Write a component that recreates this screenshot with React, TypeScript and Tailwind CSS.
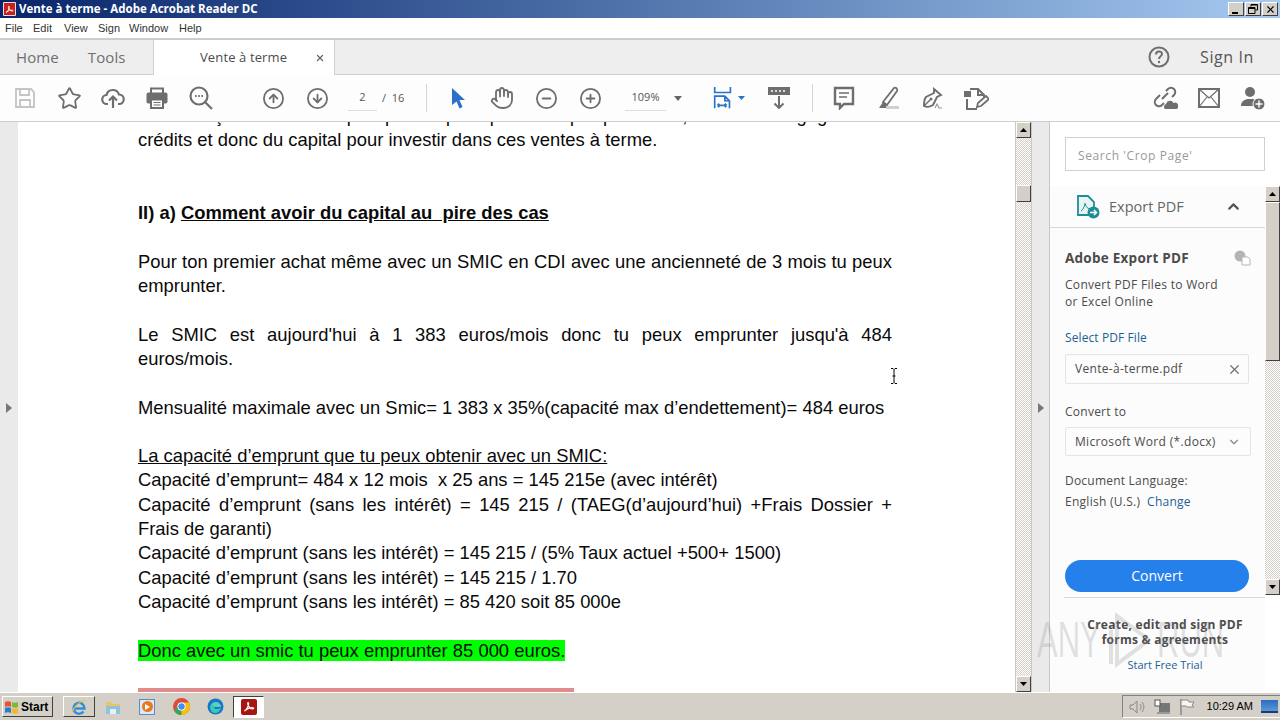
import { Star, CircleArrowUp, CircleArrowDown, CircleMinus, CirclePlus, Hand, ChevronUp, ChevronDown, X } from "lucide-react";

const hatch = "bg-[conic-gradient(#d4d0c8_25%,#ffffff_0_50%,#d4d0c8_0_75%,#ffffff_0)] bg-[length:2px_2px]";
const bevel = "bg-[#d4d0c8] border border-t-white border-l-white border-r-[#404040] border-b-[#404040]";

const IconBox = ({ children, className = "w-[44px]" }: { children: React.ReactNode; className?: string }) => (
  <div className={`${className} h-full flex items-center justify-center shrink-0 text-[#6e6e6e]`}>{children}</div>
);

const AcrobatGlyph = ({ color = "#fff", size = 12 }: { color?: string; size?: number }) => (
  <svg width={size} height={size} viewBox="0 0 24 24" fill="none" stroke={color} strokeWidth="2.4">
    <path d="M3 20c3-1 7-8 8-13 .4-2 .2-4-.8-4S9 6 11 10c2 4 5 6 8 6 2 0 3-1 2-2-2-1-8 0-12 2-3 1.500-5 3-6 4z" />
  </svg>
);

const WinBtn = ({ children }: { children: React.ReactNode }) => (
  <div className={`w-[16px] h-[14px] ${bevel} flex items-center justify-center text-black`}>{children}</div>
);

const ScrollBtn = ({ up }: { up?: boolean }) => (
  <div className={`w-full h-[16px] shrink-0 ${bevel} flex items-center justify-center`}>
    <svg width="7" height="4" viewBox="0 0 7 4">
      <path d={up ? "M3.500 0 7 4H0z" : "M0 0h7L3.500 4z"} fill="#000" />
    </svg>
  </div>
);

const Para = ({ children, className = "" }: { children: React.ReactNode; className?: string }) => (
  <p className={`text-justify ${className}`}>{children}</p>
);

const Gap = () => <div className="h-[24.3px]" />;

const TitleBar = () => (
  <div className="h-[18px] flex items-center bg-gradient-to-r from-[#0a246a] to-[#a6caf0] pl-[3px] pr-[2px]">
    <div className="w-[13px] h-[14px] bg-[#e8e0dc] rounded-[1px] flex items-center justify-center mr-[3px]">
      <div className="w-[11px] h-[12px] bg-[#c8201c] flex items-center justify-center">
        <AcrobatGlyph size={9} />
      </div>
    </div>
    <span className="text-white font-bold text-[11.500px] font-['Open_Sans',sans-serif]">Vente à terme - Adobe Acrobat Reader DC</span>
    <div className="ml-auto flex gap-[1px]">
      <WinBtn><div className="w-[6px] h-[2px] bg-black mt-[7px] -ml-[2px]" /></WinBtn>
      <WinBtn>
        <svg width="10" height="10" viewBox="0 0 10 10" fill="none" stroke="#000">
          <path d="M3 2.500V.500h6.500V6H7.500M.500 3.500h6.500V9.500H.500z" />
          <path d="M3 1h6M1 4.500h6" />
        </svg>
      </WinBtn>
      <WinBtn><X size={11} strokeWidth={2.4} /></WinBtn>
    </div>
  </div>
);

const MenuBar = () => (
  <div className="h-[20px] bg-white flex items-center pl-[5px] text-[11px] text-[#333] font-['Liberation_Sans',sans-serif]">
    <span className="w-[28px]">File</span>
    <span className="w-[31px]">Edit</span>
    <span className="w-[34px]">View</span>
    <span className="w-[31px]">Sign</span>
    <span className="w-[50px]">Window</span>
    <span>Help</span>
  </div>
);

const TabBar = () => (
  <div className="h-[37px] bg-[#eeeeee] border-t-2 border-[#cccccc] flex font-['Open_Sans',sans-serif] text-[#6e6e6e]">
    <div className="w-[154px] flex items-center border-b border-r border-[#d0d0d0] pl-[16px] text-[15px] tracking-[0.1px] gap-[29px]">
      <span>Home</span>
      <span>Tools</span>
    </div>
    <div className="w-[180px] bg-white flex items-center pl-[46px] text-[13px] text-[#4b4b4b] tracking-[0.12px]">
      <span>Vente à terme</span>
      <X size={10} strokeWidth={3} className="ml-[28px] text-[#666]" />
    </div>
    <div className="flex-1 border-b border-l border-[#d0d0d0] flex items-center justify-end pr-[26px]">
      <svg width="22" height="22" viewBox="0 0 22 22" fill="none" className="mr-[30px]">
        <circle cx="11" cy="11" r="9.500" stroke="#6e6e6e" strokeWidth="2" />
        <path d="M8 8.500c0-4 6-4 6-.5 0 2.500-3 2-3 5" stroke="#6e6e6e" strokeWidth="2" />
        <circle cx="11" cy="16" r="1.200" fill="#6e6e6e" />
      </svg>
      <span className="text-[16px] text-[#555] tracking-[0.6px]">Sign In</span>
    </div>
  </div>
);

const Toolbar = () => (
  <div className="h-[47px] bg-[#fdfdfd] border-b border-[#cfcfcf] flex items-center pl-[3px] text-[#6e6e6e] font-['Open_Sans',sans-serif]">
    <IconBox>
      <svg width="22" height="22" viewBox="0 0 22 22" fill="none" stroke="#c4c4c4" strokeWidth="1.800">
        <path d="M2 2h15l3 3v15H2z" /><path d="M6 2v6h9V2M6 20v-7h10v7" />
      </svg>
    </IconBox>
    <IconBox><Star size={25} strokeWidth={1.7} /></IconBox>
    <IconBox>
      <svg width="24" height="24" viewBox="0 0 24 24" fill="none" stroke="#6e6e6e" strokeWidth="2.200">
        <path d="M7 18H6a4.500 4.500 0 0 1-.5-9A6.500 6.500 0 0 1 18 8.500a4.500 4.500 0 0 1 0 9.500h-1" />
        <path d="M12 22V11M8 14.500l4-4 4 4" />
      </svg>
    </IconBox>
    <IconBox>
      <svg width="24" height="24" viewBox="0 0 24 24">
        <path d="M6 7V2.500h12V7" fill="none" stroke="#6e6e6e" strokeWidth="2" />
        <rect x="1.500" y="6.500" width="21" height="11" rx="2" fill="#6e6e6e" />
        <rect x="6" y="13.500" width="12" height="8.500" fill="#fff" stroke="#6e6e6e" strokeWidth="2" />
        <path d="M8.500 16.500h7M8.500 19h7" stroke="#6e6e6e" strokeWidth="1.200" />
      </svg>
    </IconBox>
    <IconBox>
      <svg width="26" height="26" viewBox="0 0 26 26" fill="none" stroke="#6e6e6e" strokeWidth="2.200">
        <circle cx="11" cy="11" r="8.500" /><path d="M17 17l7 7" />
        <path d="M7 11h1.600M10.200 11h1.600M13.400 11H15" />
      </svg>
    </IconBox>
    <div className="w-[28px] shrink-0" />
    <IconBox><CircleArrowUp size={23} strokeWidth={1.900} /></IconBox>
    <IconBox><CircleArrowDown size={23} strokeWidth={1.900} /></IconBox>
    <div className="w-[9px] shrink-0" />
    <div className="w-[29px] h-[26px] border-b border-[#ddd] text-[11px] text-center leading-[24px] text-[#555] shrink-0">2</div>
    <span className="ml-[5px] w-[44px] shrink-0 text-[11px] text-[#555]">/&nbsp; 16</span>
    <div className="w-px h-[28px] bg-[#d4d4d4] shrink-0" />
    <div className="w-[9px] shrink-0" />
    <IconBox>
      <svg width="16" height="22" viewBox="0 0 16 22"><path d="M2 1l13 12H9.500l3 7-3 1.500-3-7L2 18z" fill="#2a72c8" /></svg>
    </IconBox>
    <IconBox><Hand size={24} strokeWidth={1.800} /></IconBox>
    <IconBox><CircleMinus size={23} strokeWidth={1.900} /></IconBox>
    <IconBox><CirclePlus size={23} strokeWidth={1.900} /></IconBox>
    <div className="w-[13px] shrink-0" />
    <div className="w-[41px] h-[26px] border-b border-[#ddd] text-[11px] text-center leading-[24px] text-[#555] shrink-0">109%</div>
    <svg width="8" height="5" viewBox="0 0 8 5" className="ml-[8px] shrink-0"><path d="M0 0h8L4 5z" fill="#666" /></svg>
    <div className="w-[31px] shrink-0" />
    <svg width="20" height="24" viewBox="0 0 20 26" fill="none" stroke="#2a72c8" strokeWidth="1.800" className="shrink-0">
      <path d="M1 1v6h17V1M1 24V11h11l5 5v8M12 11v5h5M4 21h10M4 21l2-2M4 21l2 2M14 21l-2-2M14 21l-2 2" />
    </svg>
    <svg width="7" height="4" viewBox="0 0 7 4" className="ml-[5px] shrink-0"><path d="M0 0h7L3.500 4z" fill="#2a72c8" /></svg>
    <div className="w-[23px] shrink-0" />
    <svg width="22" height="22" viewBox="0 0 22 22" fill="none" className="shrink-0">
      <rect x="0" y="0" width="22" height="8" fill="#6e6e6e" />
      <path d="M3 4h2M7 4h2M11 4h2M15 4h2" stroke="#fff" strokeWidth="1.500" />
      <path d="M11 9v12M6.500 16.500l4.500 4.500 4.500-4.500" stroke="#6e6e6e" strokeWidth="2" />
    </svg>
    <div className="w-[22px] shrink-0" />
    <div className="w-px h-[28px] bg-[#d4d4d4] shrink-0" />
    <div className="w-[9px] shrink-0" />
    <IconBox>
      <svg width="22" height="24" viewBox="0 0 22 24" fill="none">
        <path d="M2 2h18v16H11l-4 4v-4H2z" stroke="#6e6e6e" strokeWidth="2.400" fill="#fff" />
        <path d="M6 7h10M6 11h8" stroke="#6e6e6e" strokeWidth="1.500" />
      </svg>
    </IconBox>
    <IconBox>
      <svg width="24" height="24" viewBox="0 0 24 24" fill="none">
        <path d="M7 16L18 2c2-1 4 1 3 3L11 19z" stroke="#6e6e6e" strokeWidth="1.800" />
        <path d="M7 16l-4 6h7l1-3" fill="#6e6e6e" />
        <rect x="10" y="20" width="13" height="3" fill="#d0d0d0" />
      </svg>
    </IconBox>
    <IconBox>
      <svg width="24" height="24" viewBox="0 0 24 24" fill="none">
        <path d="M14 3l7 6-4 2-4 8c-3 2-7 2-9 1 0-3 0-7 2-9l8-4z" stroke="#6e6e6e" strokeWidth="1.900" />
        <path d="M4 20l6-6" stroke="#6e6e6e" strokeWidth="1.500" />
        <circle cx="11" cy="13" r="1.500" fill="#6e6e6e" />
        <path d="M15 22l2-4 2 4h3" stroke="#999" strokeWidth="1.200" />
      </svg>
    </IconBox>
    <IconBox>
      <svg width="26" height="26" viewBox="0 0 26 26" fill="none">
        <path d="M7 4h8l6 6v2M4 14v10h10" stroke="#6e6e6e" strokeWidth="2" />
        <path d="M15 4v6h6" stroke="#6e6e6e" strokeWidth="2" />
        <rect x="1" y="6" width="7" height="6" fill="#6e6e6e" />
        <path d="M14 22l1-4 8-7 3 3-8 7z" stroke="#6e6e6e" strokeWidth="1.800" />
      </svg>
    </IconBox>
    <div className="flex-1" />
    <IconBox>
      <svg width="26" height="26" viewBox="0 0 26 26" fill="none">
        <path d="M10 14l6-6M8 10L4 14a4.200 4.200 0 0 0 6 6l2-2M14 6l2-2a4.200 4.200 0 0 1 6 6l-2 2" stroke="#6e6e6e" strokeWidth="2" />
        <path d="M13 24a3 3 0 0 1 1-5 4 4 0 0 1 7.500-1 3 3 0 0 1 3 6z" fill="#6e6e6e" />
      </svg>
    </IconBox>
    <IconBox>
      <svg width="22" height="20" viewBox="0 0 22 20" fill="none" stroke="#6e6e6e">
        <rect x="1" y="1" width="20" height="18" strokeWidth="2" /><path d="M1 1l10 9 10-9M1 19l8-10M21 19l-8-10" strokeWidth="1.200" />
      </svg>
    </IconBox>
    <IconBox>
      <svg width="26" height="26" viewBox="0 0 26 26">
        <circle cx="10" cy="7" r="5" fill="#6e6e6e" />
        <path d="M1 21c0-5 4-6 6-7h6c2 .5 3 1 3 3v4z" fill="#6e6e6e" />
        <circle cx="19" cy="19" r="6" fill="#6e6e6e" stroke="#fff" />
        <path d="M19 15.500v7M15.500 19h7" stroke="#fff" strokeWidth="1.500" />
      </svg>
    </IconBox>
    <div className="w-[5px] shrink-0" />
  </div>
);

const Document = () => (
  <div className="w-[997px] bg-white overflow-hidden shrink-0">
    <div className="w-[754px] ml-[120px] -mt-[18px] font-['Liberation_Sans',sans-serif] text-[18.400px] leading-[24.3px] text-[#0a0a0a]">
      <Para className="[text-align-last:justify]">Les Français ne le font pas parce qu'ils pensent que pour cela, et il faut engager leurs</Para>
      <Para>crédits et donc du capital pour investir dans ces ventes à terme.</Para>
      <Gap /><Gap />
      <p className="font-bold">II) a) <span className="underline">Comment avoir du capital au&nbsp; pire des cas</span></p>
      <Gap />
      <Para>Pour ton premier achat même avec un SMIC en CDI avec une ancienneté de 3 mois tu peux emprunter.</Para>
      <Gap />
      <Para>Le SMIC est aujourd'hui à 1 383 euros/mois donc tu peux emprunter jusqu'à 484 euros/mois.</Para>
      <Gap />
      <Para>Mensualité maximale avec un Smic= 1 383 x 35%(capacité max d’endettement)= 484 euros</Para>
      <Gap />
      <p className="underline">La capacité d’emprunt que tu peux obtenir avec un SMIC:</p>
      <p>Capacité d’emprunt= 484 x 12 mois&nbsp; x 25 ans = 145 215e (avec intérêt)</p>
      <Para>Capacité d’emprunt (sans les intérêt) = 145 215 / (TAEG(d’aujourd’hui) +Frais Dossier + Frais de garanti)</Para>
      <p>Capacité d’emprunt (sans les intérêt) = 145 215 / (5% Taux actuel +500+ 1500)</p>
      <p>Capacité d’emprunt (sans les intérêt) = 145 215 / 1.70</p>
      <p>Capacité d’emprunt (sans les intérêt) = 85 420 soit 85 000e</p>
      <Gap />
      <p><span className="bg-[#00ff00]">Donc avec un smic tu peux emprunter 85 000 euros.</span></p>
      <Gap />
      <div className="w-[436px] h-[24px] mt-[1px] bg-[#e08c8c]" />
    </div>
  </div>
);

const DocScroll = () => (
  <div className={`w-[17px] shrink-0 flex flex-col ${hatch} border-x border-[#c8c8c8]`}>
    <ScrollBtn up />
    <div className="h-[47px] shrink-0" />
    <div className={`h-[17px] w-full shrink-0 ${bevel}`} />
    <div className="flex-1" />
    <ScrollBtn />
  </div>
);

const Rail = ({ w }: { w: string }) => (
  <div className={`${w} shrink-0 bg-[#eaeaea] flex items-center justify-center`}>
    <svg width="6" height="10" viewBox="0 0 6 10" className="mt-[1px]"><path d="M0 0l6 5-6 5z" fill="#777" /></svg>
  </div>
);

const SidePanel = () => (
  <div className="flex-1 bg-white border-l border-[#c8c8c8] flex flex-col font-['Open_Sans',sans-serif] text-[#4b4b4b] relative">
    <div className="pl-[15px] pt-[15px] h-[64px]">
      <div className="w-[200px] h-[34px] border border-[#cfcfcf] flex items-center pl-[12px] pt-[3px] text-[12px] text-[#999] tracking-[0.6px]">Search 'Crop Page'</div>
    </div>
    <div className="flex flex-1 min-h-0">
      <div className="w-[215px] flex flex-col bg-[#fcfcfc]">
        <div className="h-[42px] shrink-0 border-b border-[#d8d8d8] flex items-center pl-[26px] pr-[23px]">
          <svg width="24" height="24" viewBox="0 0 24 24" fill="none" className="shrink-0">
            <path d="M2 1h10l6 6v13H2z" stroke="#1c8f96" strokeWidth="1.800" fill="#e8f4f4" />
            <path d="M5 16c2-1 3-4 4-7 0-2 0 0 1 2s3 3 5 3" stroke="#1c8f96" strokeWidth="1" />
            <circle cx="17.500" cy="17.500" r="6" fill="#1c8f96" />
            <path d="M14 17.500h6M18 15l2.500 2.500L18 20" stroke="#fff" strokeWidth="1.500" />
          </svg>
          <span className="ml-[9px] text-[14.500px] text-[#666]">Export PDF</span>
          <ChevronUp size={17} strokeWidth={3} className="ml-auto text-[#555]" />
        </div>
        <div className="flex-1 pl-[15px] pr-[15px] relative">
          <div className="flex items-center mt-[21px] h-[18px]">
            <span className="font-bold text-[13.500px] text-[#4b4b4b] tracking-[0.25px]">Adobe Export PDF</span>
            <svg width="17" height="16" viewBox="0 0 17 16" className="ml-auto -mr-[1px]">
              <circle cx="6" cy="6" r="5.500" fill="#b4b4b4" />
              <path d="M8 7h6l2 2v6H8z" fill="#fff" stroke="#b4b4b4" />
            </svg>
          </div>
          <p className="mt-[9px] text-[12px] leading-[17px] tracking-[0.3px]">Convert PDF Files to Word<br />or Excel Online</p>
          <p className="mt-[19px] text-[12px] leading-[17px] text-[#1c5f96] tracking-[0.1px]">Select PDF File</p>
          <div className="mt-[8px] w-[184px] h-[30px] border border-[#e4e4e4] rounded-[2px] flex items-center pl-[9px] pr-[6px] text-[12px] tracking-[0.3px]">
            <span>Vente-à-terme.pdf</span>
            <X size={15} strokeWidth={2.200} className="ml-auto text-[#777]" />
          </div>
          <p className="mt-[19px] text-[12px] leading-[17px] tracking-[0.25px]">Convert to</p>
          <div className="mt-[7px] w-[186px] h-[29px] border border-[#e4e4e4] rounded-[2px] flex items-center pl-[9px] pr-[9px] text-[12px]">
            <span className="whitespace-nowrap tracking-[0.33px]">Microsoft Word (*.docx)</span>
            <ChevronDown size={14} strokeWidth={2} className="ml-auto text-[#888]" />
          </div>
          <p className="mt-[16px] text-[12px] leading-[17px] tracking-[0.22px]">Document Language:</p>
          <p className="mt-[4px] text-[12px] leading-[17px] tracking-[0.27px]">English (U.S.)&nbsp; <span className="text-[#1c5f96]">Change</span></p>
          <div className="mt-[50px] w-[184px] h-[32px] rounded-full bg-[#2680eb] text-white text-[14px] flex items-center justify-center pb-[1px]">Convert</div>
          <div className="absolute left-[14px] right-0 top-[369px] h-px bg-[#d8d8d8]" />
        </div>
      </div>
      <div className={`w-[15px] ${hatch} flex flex-col h-[409px]`}>
        <ScrollBtn up />
        <div className={`h-[159px] w-full shrink-0 ${bevel}`} />
        <div className="flex-1" />
        <ScrollBtn />
      </div>
    </div>
    <div className="absolute left-[22px] w-[186px] top-[495px] text-center font-bold text-[12px] leading-[15px] text-[#4b4b4b] tracking-[0.25px]">
      <p>Create, edit and sign PDF</p>
      <p>forms &amp; agreements</p>
      <p className="mt-[10px] font-normal text-[#1c5f96] text-[11px] tracking-normal">Start Free Trial</p>
    </div>
  </div>
);

const Watermark = () => (
  <div className="absolute left-[1037px] top-[488px] flex items-center text-[#8a8a8a]/25 text-[50px] leading-[50px] font-['Liberation_Sans',sans-serif] pointer-events-none">
    <span className="w-[72px] inline-block scale-x-[0.62] origin-left">ANY</span>
    <svg width="42" height="60" viewBox="0 0 42 60" fill="none" stroke="#8a8a8a" strokeOpacity="0.25" strokeWidth="4"><path d="M8 6l32 24-32 24z" /><path d="M2 20v34" /></svg>
    <span className="w-[80px] ml-[6px] inline-block scale-x-[0.62] origin-left">RUN</span>
  </div>
);

const TrayIcons = () => (
  <>
    <svg width="16" height="14" viewBox="0 0 16 14" fill="none" stroke="#888"><path d="M1 5h3l4-4v12l-4-4H1zM11 4c1.500 2 1.500 4 0 6M13 2c2.500 3 2.500 7 0 10" /></svg>
    <svg width="17" height="16" viewBox="0 0 17 16" className="ml-[9px]"><rect x="5" y="4" width="11" height="9" fill="#777" /><rect x="1" y="1" width="5" height="6" fill="#fff" stroke="#555" /><path d="M3 13h13v2H3z" fill="#999" /></svg>
    <svg width="16" height="16" viewBox="0 0 16 16" fill="none" className="ml-[8px]" stroke="#888"><path d="M2 0v16" strokeWidth="1.500" /><path d="M2 1h7l1 2h5l-2 3 2 2H8L7 7H2z" fill="#f4f4f0" /></svg>
  </>
);

const Taskbar = () => (
  <div className="h-[28px] bg-[#d4d0c8] border-t border-white flex items-center pl-[2px] font-['Liberation_Sans',sans-serif]">
    <div className={`w-[51px] h-[21px] ${bevel} flex items-center pl-[1px]`}>
      <svg width="16" height="15" viewBox="0 0 16 15" className="shrink-0">
        <path d="M1 3c2-1 4-1 6 0v5c-2-1-4-1-6 0z" fill="#e8552c" />
        <path d="M8 3c2 1 4 1 6 0v5c-2 1-4 1-6 0z" fill="#7ab93c" />
        <path d="M1 9c2-1 4-1 6 0v5c-2-1-4-1-6 0z" fill="#2a7bd8" />
        <path d="M8 9c2 1 4 1 6 0v5c-2 1-4 1-6 0z" fill="#f6b820" />
      </svg>
      <span className="font-bold text-[12px] ml-[1px] text-black">Start</span>
    </div>
    <div className={`ml-[10px] w-[32px] h-[21px] ${bevel} flex items-center justify-center`}>
      <svg width="18" height="18" viewBox="0 0 18 18" fill="none">
        <path d="M3 10.500h11.500a5.500 5.500 0 1 0-1 3" stroke="#2e8fd8" strokeWidth="2.400" />
        <path d="M2 14c3-6 8-11 14-12" stroke="#f0c040" strokeWidth="1.200" />
      </svg>
    </div>
    <div className="w-[34px] ml-[1px] flex justify-center">
      <svg width="16" height="16" viewBox="0 0 16 16"><path d="M1 3h5l2 2h7v3H1z" fill="#e8c468" /><path d="M1 7h14v8H1z" fill="#8cc4dc" /><rect x="5" y="10" width="6" height="5" fill="#e8f0f4" /></svg>
    </div>
    <div className="w-[34px] flex justify-center">
      <div className="w-[16px] h-[16px] border border-[#5a8cc8] bg-[#dde8f4] flex items-center justify-center">
        <div className="w-[11px] h-[11px] rounded-full bg-[#e87820] flex items-center justify-center">
          <div className="w-0 h-0 border-y-[3px] border-y-transparent border-l-[5px] border-l-white ml-[1px]" />
        </div>
      </div>
    </div>
    <div className="w-[34px] flex justify-center">
      <svg width="17" height="17" viewBox="0 0 17 17">
        <circle cx="8.500" cy="8.500" r="8.500" fill="#dd4b3e" />
        <path d="M8.500 8.500L1.100 12.800A8.500 8.500 0 0 0 8.500 17z" fill="#3aa655" />
        <path d="M8.500 4.500H16A8.500 8.500 0 0 1 8.500 17z" fill="#f4c20d" />
        <path d="M1 13l4-6 3.500 6z" fill="#3aa655" />
        <circle cx="8.500" cy="8.500" r="3.800" fill="#4a8af4" stroke="#fff" strokeWidth="1" />
      </svg>
    </div>
    <div className="w-[34px] flex justify-center">
      <svg width="17" height="17" viewBox="0 0 17 17">
        <circle cx="8.500" cy="8.500" r="8" fill="#1478c8" />
        <path d="M3 9c1-4 4-5 6-5s5 2 5 5H7c0 2 3 3 7 1-1 3-3 5-6 5-3 0-5-3-5-6z" fill="#3cc8b4" />
        <path d="M7 9h7c0-3-2-5-5-5-1.500 0-4 1-5 3 1-1 3-1 3 2z" fill="#fff" fillOpacity="0.15" />
      </svg>
    </div>
    <div className="ml-[1px] w-[31px] h-[22px] bg-white border border-t-[#404040] border-l-[#404040] border-r-white border-b-white flex items-center justify-center">
      <div className="w-[16px] h-[16px] bg-[#a81410] rounded-[2px] flex items-center justify-center"><AcrobatGlyph size={12} /></div>
    </div>
    <div className="ml-auto w-[158px] h-[23px] border border-[#808080] border-r-0 border-b-white flex items-center pl-[6px] pr-[2px]">
      <TrayIcons />
      <span className="ml-auto text-[11px] text-black">10:29 AM</span>
      <div className="ml-[8px] w-[17px] h-[13px] bg-gradient-to-b from-[#2a6cc0] to-[#5a98d8] border-b-2 border-[#1a3c70]" />
    </div>
  </div>
);

export default function App() {
  return (
    <div className="w-[1280px] h-[720px] flex flex-col overflow-hidden bg-white">
      <TitleBar />
      <MenuBar />
      <TabBar />
      <Toolbar />
      <div className="h-[570px] flex shrink-0 relative">
        <Rail w="w-[18px]" />
        <Document />
        <DocScroll />
        <Rail w="w-[17px]" />
        <SidePanel />
        <Watermark />
        {/* mouse cursor caught in the screenshot */}
        <svg width="8" height="16" viewBox="0 0 8 16" fill="none" stroke="#000" className="absolute left-[890px] top-[246px]">
          <path d="M1 .500h2l1 1 1-1h2M4 1.500v13M1 15.500h2l1-1 1 1h2M2.500 8h3" />
        </svg>
      </div>
      <Taskbar />
    </div>
  );
}
